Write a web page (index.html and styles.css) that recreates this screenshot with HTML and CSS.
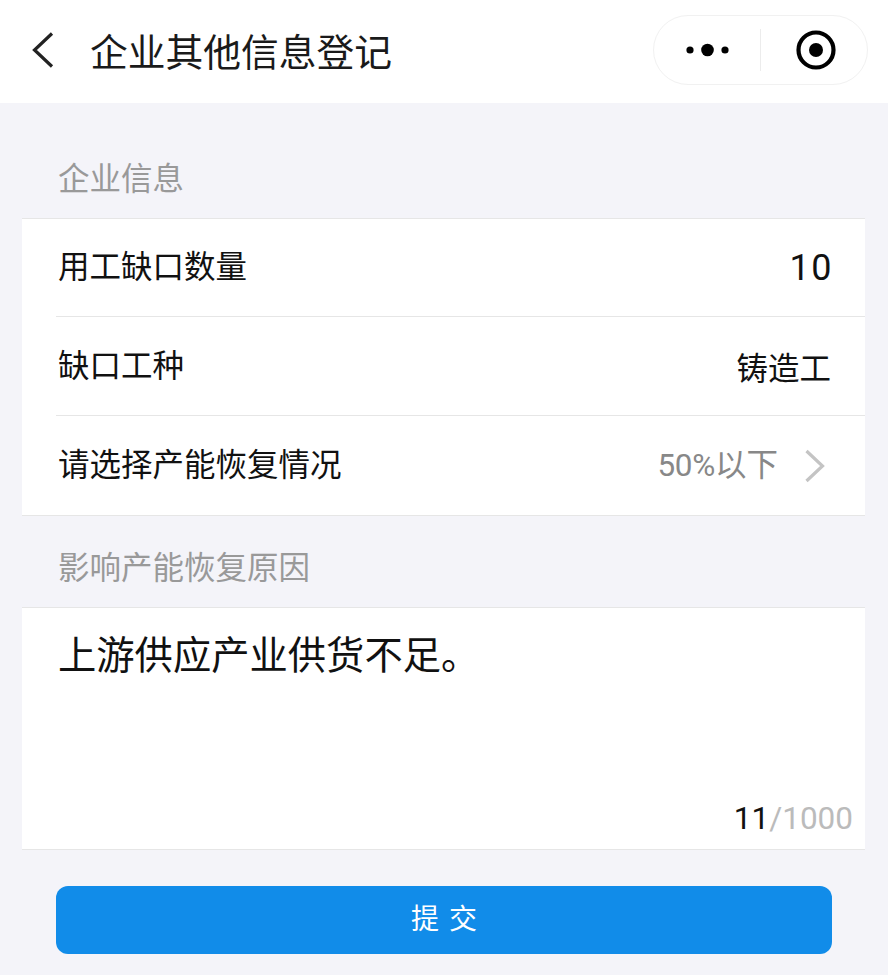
FILE: index.html
```html
<!DOCTYPE html>
<html lang="zh">
<head>
    <meta charset="UTF-8">
    <meta name="viewport" content="width=device-width, initial-scale=1.0">
    <title>企业其他信息登记</title>
    <link rel="stylesheet" href="styles.css">
</head>
<body>
    <!-- 顶部导航 -->
    <div class="nav-bar">
        <svg class="back" width="26" height="40" viewBox="0 0 26 40">
            <path d="M22 3.500 L4.500 20 L22 36.500" fill="none" stroke="#222" stroke-width="3.200"/>
        </svg>
        <div class="nav-title">企业其他信息登记</div>
        <div class="capsule">
            <svg class="capsule-more" width="44" height="16" viewBox="0 0 44 16">
                <circle cx="4" cy="8" r="3.600" fill="#000"/>
                <circle cx="21.500" cy="8" r="6.300" fill="#000"/>
                <circle cx="39" cy="8" r="3.600" fill="#000"/>
            </svg>
            <span class="capsule-line"></span>
            <svg class="capsule-close" width="40" height="40" viewBox="0 0 40 40">
                <circle cx="20" cy="20" r="17.500" fill="none" stroke="#000" stroke-width="4.200"/>
                <circle cx="20" cy="20" r="7" fill="#000"/>
            </svg>
        </div>
    </div>

    <div class="section-title first">企业信息</div>
    <div class="card">
        <div class="row">
            <span class="row-label">用工缺口数量</span>
            <span class="row-value num">10</span>
        </div>
        <div class="row">
            <span class="row-label">缺口工种</span>
            <span class="row-value">铸造工</span>
        </div>
        <div class="row">
            <span class="row-label">请选择产能恢复情况</span>
            <span class="row-value picked"><span class="percent">50%</span>以下</span>
            <svg class="arrow" width="22" height="34" viewBox="0 0 22 34">
                <path d="M2.500 2 L18.500 17 L2.500 32" fill="none" stroke="#c4c4c4" stroke-width="3.200"/>
            </svg>
        </div>
    </div>

    <div class="section-title">影响产能恢复原因</div>
    <div class="card text-card">
        <div class="text-value">上游供应产业供货不足。</div>
        <div class="counter"><span class="count-now">11</span>/1000</div>
    </div>

    <div class="btn-wrap">
        <div class="submit">提 交</div>
    </div>
</body>
</html>
```

FILE: styles.css
```css
body {
    margin: 0;
    background-color: #f4f4f9;
    font-family: "Liberation Sans", "Noto Sans CJK SC", sans-serif;
    color: #111;
}

.nav-bar {
    display: flex;
    align-items: center;
    height: 103px;
    padding: 0 20px 3px 30px;
    background-color: #fff;
    box-sizing: border-box;
}
.back {
    flex: none;
}
.nav-title {
    flex: 1;
    margin-left: 34px;
    margin-bottom: 2px;
    font-size: 37.750px;
    color: #1a1a1a;
}
.capsule {
    display: flex;
    align-items: center;
    width: 215px;
    height: 70px;
    box-sizing: border-box;
    border: 1px solid #f1f1f1;
    border-radius: 35px;
    padding-left: 32px;
}
.capsule-line {
    width: 1px;
    height: 42px;
    margin-left: 30px;
    background-color: #ececec;
}
.capsule-close {
    margin-left: 35px;
}

.section-title {
    padding: 30px 0 0 58px;
    height: 91px;
    box-sizing: border-box;
    font-size: 31.500px;
    line-height: 45px;
    color: #999;
}
.section-title.first {
    height: 115px;
    padding-top: 54px;
}

.card {
    margin: 0 23px 0 22px;
    background-color: #fff;
    border-top: 1px solid #e6e6e6;
    border-bottom: 1px solid #e6e6e6;
}
.row {
    display: flex;
    align-items: center;
    height: 98px;
    margin-left: 34px;
    padding-right: 34px;
    border-bottom: 1px solid #e6e6e6;
}
.row:first-child {
    height: 97px;
}
.row:last-child {
    height: 99px;
    border-bottom: none;
}
.row-label {
    flex: 1;
    margin-bottom: 7px;
    padding-left: 2px;
    font-size: 31.500px;
}
.row-value {
    font-size: 31.500px;
}
.row-value.num {
    margin-right: -2px;
    font-family: Roboto, sans-serif;
    font-size: 36px;
    letter-spacing: 1.500px;
}
.row-value.picked {
    margin-bottom: 7px;
    color: #888;
}
.percent {
    font-family: Roboto, sans-serif;
    font-size: 31.500px;
    letter-spacing: -0.300px;
}
.arrow {
    margin: 0 5px 0 26px;
}

.text-card {
    height: 243px;
    box-sizing: border-box;
    display: flex;
    flex-direction: column;
    justify-content: space-between;
}
.text-value {
    padding: 22px 0 0 36px;
    font-size: 38.300px;
    line-height: 52px;
}
.counter {
    padding: 0 12px 11px 0;
    text-align: right;
    font-family: Roboto, sans-serif;
    font-size: 31.500px;
    line-height: 38px;
    color: #bbb;
}
.count-now {
    color: #111;
}

.btn-wrap {
    padding: 36px 56px 21px;
}
.submit {
    height: 68px;
    line-height: 68px;
    border-radius: 12px;
    background-color: #118ce9;
    color: #fff;
    font-size: 28px;
    text-align: center;
    letter-spacing: 1px;
    text-indent: 1px;
}
```
